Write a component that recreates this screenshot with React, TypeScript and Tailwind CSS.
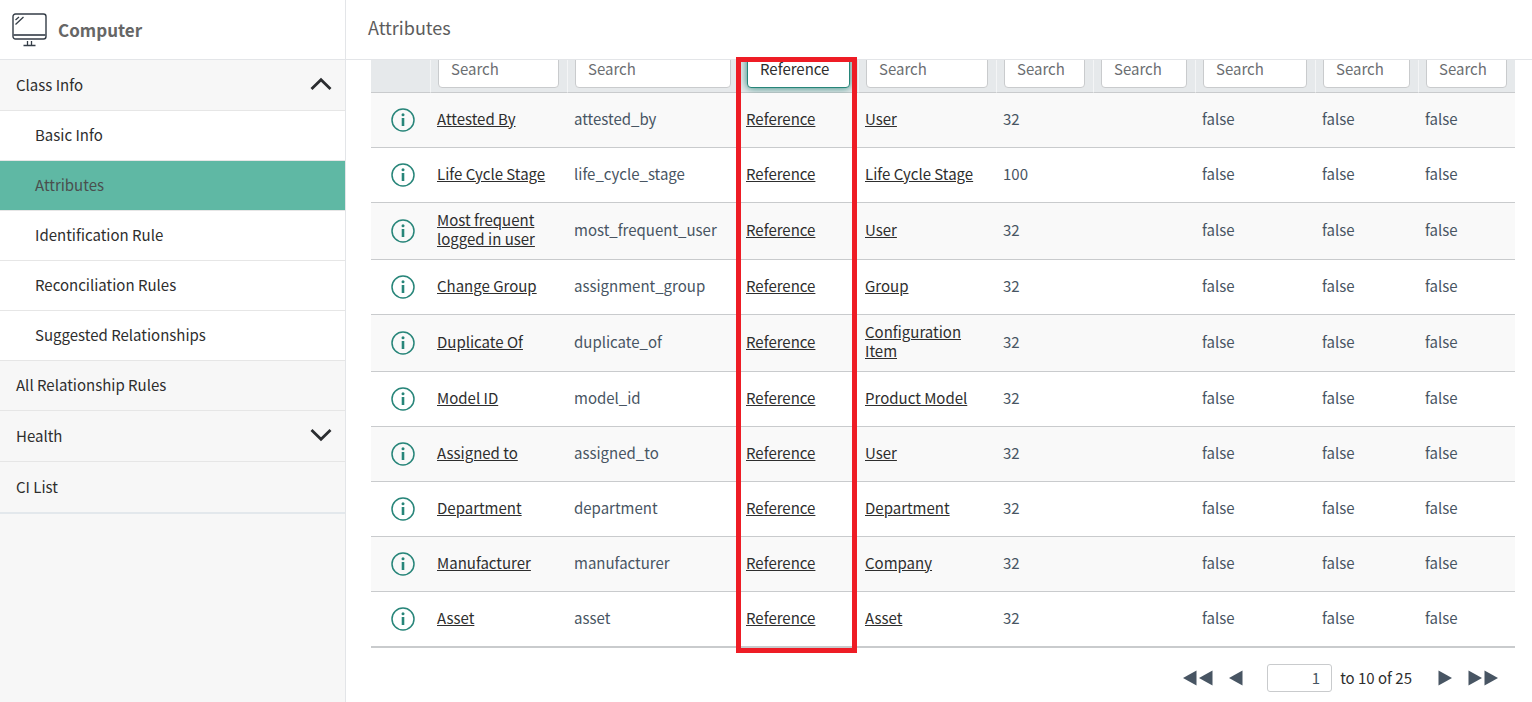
import React from "react";

type Row = { label: string; name: string; ref: string; max: string };

const rows: Row[] = [
  { label: "Attested By", name: "attested_by", ref: "User", max: "32" },
  { label: "Life Cycle Stage", name: "life_cycle_stage", ref: "Life Cycle Stage", max: "100" },
  { label: "Most frequent logged in user", name: "most_frequent_user", ref: "User", max: "32" },
  { label: "Change Group", name: "assignment_group", ref: "Group", max: "32" },
  { label: "Duplicate Of", name: "duplicate_of", ref: "Configuration Item", max: "32" },
  { label: "Model ID", name: "model_id", ref: "Product Model", max: "32" },
  { label: "Assigned to", name: "assigned_to", ref: "User", max: "32" },
  { label: "Department", name: "department", ref: "Department", max: "32" },
  { label: "Manufacturer", name: "manufacturer", ref: "Company", max: "32" },
  { label: "Asset", name: "asset", ref: "Asset", max: "32" },
];

const filters = [
  { label: "Column Label", value: "" },
  { label: "Column name", value: "" },
  { label: "Type", value: "Reference" },
  { label: "Reference", value: "" },
  { label: "Max length", value: "" },
  { label: "Default value", value: "" },
  { label: "Mandatory", value: "" },
  { label: "Read only", value: "" },
  { label: "Active", value: "" },
];

const subItems = ["Basic Info", "Attributes", "Identification Rule", "Reconciliation Rules", "Suggested Relationships"];

function MonitorIcon() {
  return (
    <svg width="36" height="34" viewBox="0 0 36 34" fill="none" stroke="#343d47" aria-hidden="true">
      <rect x="1" y="1" width="33" height="25" rx="2.5" strokeWidth="1.4" />
      <path d="M1 22H34" stroke="#5b626b" strokeWidth="1.8" />
      <path d="M3.5 11.5L11.5 4M3.5 7L7 4" strokeWidth="1.3" />
      <path d="M15.5 28V32M19.5 28V32M11.5 32.5H23.5" strokeWidth="1.3" />
    </svg>
  );
}

function Chevron({ up }: { up?: boolean }) {
  return (
    <svg width="22" height="14" viewBox="0 0 22 14" fill="none" stroke="#2b2d30" strokeWidth="2.8" aria-hidden="true">
      <path d={up ? "M1.5 12L11 2.8L20.5 12" : "M1.5 2L11 11.2L20.5 2"} />
    </svg>
  );
}

function InfoIcon() {
  return (
    <svg width="24" height="24" viewBox="0 0 24 24" fill="none" aria-hidden="true">
      <circle cx="12" cy="12" r="11" stroke="#278579" strokeWidth="1.5" />
      <circle cx="12" cy="6.8" r="1.5" fill="#278579" />
      <path d="M12 10V18" stroke="#278579" strokeWidth="2.6" />
    </svg>
  );
}

function Arrows({ count, left }: { count: number; left?: boolean }) {
  return (
    <svg width={count === 2 ? 30 : 14} height="16" viewBox={count === 2 ? "0 0 30 16" : "0 0 14 16"} fill="#485563" aria-hidden="true">
      <path d={left ? "M0 8L13.5 0.5V15.5Z" : "M0.5 0.5V15.5L14 8Z"} />
      {count === 2 && <path d={left ? "M16 8L29.5 0.5V15.5Z" : "M16.5 0.5V15.5L30 8Z"} />}
    </svg>
  );
}

const link = "text-[#2e2e2e] underline underline-offset-1";
const cell = "pt-[7px] pr-2 pb-[11px] pl-[7px]";

export default function App() {
  return (
    <div className="flex min-h-screen bg-white font-['Noto_Sans_CJK_SC','Noto_Sans',sans-serif] text-[15px] leading-[19px] text-[#2e2e2e]">
      <aside className="flex w-[346px] shrink-0 flex-col border-r border-[#e3e5e8] bg-[#f7f7f7]">
        <div className="flex h-[60px] items-center gap-[10px] border-b border-[#e3e5e8] bg-white pl-3">
          <MonitorIcon />
          <h1 className="text-[17px] leading-6 font-bold text-[#666]">Computer</h1>
        </div>
        <nav className="flex flex-col">
          <button type="button" aria-expanded="true" className="flex h-[51px] items-center justify-between border-b border-[#e6e6e6] pr-[13px] pb-[2px] pl-4">
            Class Info
            <Chevron up />
          </button>
          {subItems.map((item) => (
            <a
              key={item}
              href="#"
              className={
                item === "Attributes"
                  ? "flex h-[50px] items-center border-b border-[#e6e6e6] bg-[#5fb8a4] pb-[2px] pl-[35px] text-[#4a4f4e]"
                  : "flex h-[50px] items-center border-b border-[#e6e6e6] bg-white pb-[2px] pl-[35px]"
              }
            >
              {item}
            </a>
          ))}
          <a href="#" className="flex h-[50px] items-center border-b border-[#e6e6e6] pb-[2px] pl-4">
            All Relationship Rules
          </a>
          <button type="button" aria-expanded="false" className="flex h-[51px] items-center justify-between border-b border-[#e6e6e6] pr-[13px] pb-[2px] pl-4">
            Health
            <Chevron />
          </button>
          <a href="#" className="flex h-[52px] items-center border-b-2 border-[#e3e8ec] pb-[2px] pl-4">
            CI List
          </a>
        </nav>
      </aside>

      <main className="flex min-w-0 flex-1 flex-col">
        <header className="flex h-[60px] shrink-0 items-center border-b border-[#e3e5e8] pb-[6px] pl-[22px]">
          <h2 className="text-[18px] leading-6 text-[#5c5c5c]">Attributes</h2>
        </header>

        <div className="relative mr-[17px] ml-[25px]">
          <div className="overflow-hidden">
            <table className="-mt-[11px] w-full table-fixed border-separate border-spacing-0 text-left">
              <colgroup>
                <col className="w-[59px]" />
                <col className="w-[137px]" />
                <col className="w-[172px]" />
                <col className="w-[119px]" />
                <col className="w-[138px]" />
                <col className="w-[97px]" />
                <col className="w-[102px]" />
                <col className="w-[120px]" />
                <col className="w-[103px]" />
                <col className="w-[97px]" />
              </colgroup>
              <thead>
                <tr className="h-[44px] bg-[#e6e9eb]">
                  <td className="border-b border-[#c9cbcd]" />
                  {filters.map((f) => (
                    <th key={f.label} scope="col" className="border-b border-l border-b-[#c9cbcd] border-l-[#f4f5f6] pt-px pr-2 pb-1 pl-[7px] font-normal">
                      <input
                        type="text"
                        aria-label={f.label}
                        placeholder="Search"
                        defaultValue={f.value}
                        className={
                          f.value
                            ? "block h-[38px] w-full rounded border border-[#278579] bg-white px-3 pb-[2px] text-[#2e2e2e] shadow-[0_0_8px_#278579] outline-none"
                            : "block h-[38px] w-full rounded border border-[#c9cbcd] bg-white px-3 pb-[2px] outline-none placeholder:text-[#6b6e71]"
                        }
                      />
                    </th>
                  ))}
                </tr>
              </thead>
              <tbody className="text-[#485563] [&>tr:last-child>td]:border-b-2 [&>tr>td]:border-b [&>tr>td]:border-[#c9cbcd]">
                {rows.map((r) => (
                  <tr key={r.label} className="h-[55px] odd:bg-[#f9f9f9] last:h-[56px]">
                    <td className="pl-5">
                      <button type="button" aria-label={"Details of " + r.label} className="block">
                        <InfoIcon />
                      </button>
                    </td>
                    <td className={cell}>
                      <a href="#" className={link}>{r.label}</a>
                    </td>
                    <td className={cell}>{r.name}</td>
                    <td className={cell}>
                      <a href="#" className={link}>Reference</a>
                    </td>
                    <td className={cell}>
                      <a href="#" className={link}>{r.ref}</a>
                    </td>
                    <td className={cell}>{r.max}</td>
                    <td className={cell} />
                    <td className={cell}>false</td>
                    <td className={cell}>false</td>
                    <td className={cell}>false</td>
                  </tr>
                ))}
              </tbody>
            </table>
          </div>
          <div className="pointer-events-none absolute -top-[3px] -bottom-[5px] left-[calc(100%*365/1144)] w-[calc(100%*121/1144)] border-[5px] border-[#ee1c25]" />
        </div>

        <div className="mt-4 mr-[34px] flex items-center justify-end">
          <button type="button" aria-label="First page"><Arrows count={2} left /></button>
          <button type="button" aria-label="Previous page" className="ml-4"><Arrows count={1} left /></button>
          <input
            type="text"
            aria-label="Current row"
            defaultValue="1"
            className="ml-6 h-7 w-[65px] rounded-[3px] border border-[#c9cbcd] bg-white pr-[11px] pb-[2px] text-right text-[#485563] outline-none"
          />
          <span className="ml-2 pb-[2px]">to 10 of 25</span>
          <button type="button" aria-label="Next page" className="ml-[26px]"><Arrows count={1} /></button>
          <button type="button" aria-label="Last page" className="ml-4"><Arrows count={2} /></button>
        </div>
      </main>
    </div>
  );
}
